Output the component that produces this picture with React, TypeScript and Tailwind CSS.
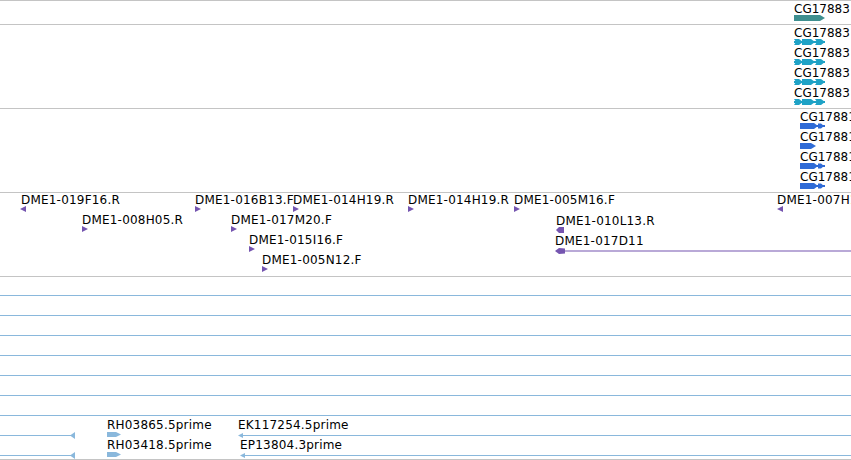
import React from "react";

const TEAL = "#3e8f8f";
const CYAN = "#1ea2c6";
const BLUE = "#2f6bd6";
const PURPLE = "#7555b0";
const SKY = "#8ab8dc";

type Glyph =
  | "teal"
  | "cyan"
  | "blueLong"
  | "blueShort"
  | "right"
  | "left"
  | "leftBar"
  | "leftLine"
  | "skyBlock"
  | "skyLeftLine"
  | "skyLineToArrow"
  | "skyLine";

type Feature = { x: number; y: number; glyph: Glyph; label?: string; ly?: number; lx?: number };

function GlyphSvg({ glyph }: { glyph: Glyph }) {
  switch (glyph) {
    case "teal":
      return (
        <svg width="32" height="6">
          <polygon points="0,0 26,0 31,3 26,6 0,6" fill={TEAL} />
        </svg>
      );
    case "cyan":
      return (
        <svg width="32" height="6">
          <rect x="0" y="2" width="31" height="2" fill={CYAN} />
          <polygon points="0,0 5,0 9,3 5,6 0,6 2,3" fill={CYAN} />
          <polygon points="8,0 17,0 21,3 17,6 8,6" fill={CYAN} />
          <polygon points="21,0 27,0 31,3 27,6 21,6 23,3" fill={CYAN} />
        </svg>
      );
    case "blueLong":
      return (
        <svg width="26" height="6">
          <rect x="0" y="2" width="25" height="2" fill={BLUE} />
          <polygon points="0,0 14,0 18,3 14,6 0,6" fill={BLUE} />
          <polygon points="18,0.5 21,0.5 24,3 21,5.5 18,5.5" fill={BLUE} />
        </svg>
      );
    case "blueShort":
      return (
        <svg width="18" height="6">
          <polygon points="0,0 11,0 16,3 11,6 0,6" fill={BLUE} />
        </svg>
      );
    case "right":
      return (
        <svg width="7" height="6">
          <polygon points="0,0 6,3 0,6" fill={PURPLE} />
        </svg>
      );
    case "left":
      return (
        <svg width="7" height="6">
          <polygon points="6,0 0,3 6,6" fill={PURPLE} />
        </svg>
      );
    case "leftBar":
      return (
        <svg width="9" height="6">
          <polygon points="0,3 3,0 8,0 8,6 3,6" fill={PURPLE} />
        </svg>
      );
    case "leftLine":
      return (
        <svg width="297" height="6">
          <rect x="4" y="2.5" width="293" height="1" fill={PURPLE} />
          <polygon points="0,3 4,0 10,0.5 10,5.5 4,6" fill={PURPLE} />
        </svg>
      );
    case "skyBlock":
      return (
        <svg width="15" height="5">
          <polygon points="0,0 9,0 14,2.5 9,5 0,5" fill={SKY} />
        </svg>
      );
    case "skyLeftLine":
      return (
        <svg width="614" height="5">
          <rect x="2" y="2" width="612" height="1" fill={SKY} />
          <polygon points="0,2.5 5,0 5,5" fill={SKY} />
        </svg>
      );
    case "skyLineToArrow":
      return (
        <svg width="76" height="7">
          <rect x="0" y="3" width="74" height="1" fill={SKY} />
          <polygon points="70,3.5 75,0 75,7" fill={SKY} />
        </svg>
      );
    case "skyLine":
      return (
        <svg width="851" height="1">
          <rect x="0" y="0" width="851" height="1" fill={SKY} />
        </svg>
      );
  }
}

function Track({
  top,
  className,
  labelClass = "",
  features,
}: {
  top: number;
  className: string;
  labelClass?: string;
  features: Feature[];
}) {
  // features use page coordinates; the padding box starts one pixel below the border
  const base = top + 1;
  return (
    <div className={`relative border-t border-[#c4c4c4] ${className}`}>
      {features.map((f, i) => (
        <React.Fragment key={i}>
          {f.label && (
            <div
              className={`absolute whitespace-nowrap ${labelClass}`}
              style={{ left: f.lx ?? f.x, top: (f.ly ?? f.y - 13) - base }}
            >
              {f.label}
            </div>
          )}
          <div className="absolute flex" style={{ left: f.x, top: f.y - base }}>
            <GlyphSvg glyph={f.glyph} />
          </div>
        </React.Fragment>
      ))}
    </div>
  );
}

const genes: Feature[] = [{ x: 794, y: 15, glyph: "teal", label: "CG17883", ly: 2 }];

const transcripts: Feature[] = [0, 1, 2, 3].map((r) => ({
  x: 794,
  y: 39 + r * 20,
  glyph: "cyan" as Glyph,
  label: "CG17883",
  ly: 26 + r * 20,
}));

const proteins: Feature[] = ["blueLong", "blueShort", "blueLong", "blueLong"].map((g, r) => ({
  x: 800,
  y: 123 + r * 20,
  glyph: g as Glyph,
  label: "CG17881",
  ly: 110 + r * 20,
}));

const ends: Feature[] = [
  { x: 20, y: 206, glyph: "left", label: "DME1-019F16.R", lx: 21 },
  { x: 195, y: 206, glyph: "right", label: "DME1-016B13.F" },
  { x: 293, y: 206, glyph: "right", label: "DME1-014H19.R" },
  { x: 408, y: 206, glyph: "right", label: "DME1-014H19.R" },
  { x: 514, y: 206, glyph: "right", label: "DME1-005M16.F" },
  { x: 777, y: 206, glyph: "left", label: "DME1-007H12.R" },
  { x: 82, y: 226, glyph: "right", label: "DME1-008H05.R" },
  { x: 231, y: 226, glyph: "right", label: "DME1-017M20.F" },
  { x: 556, y: 227, glyph: "leftBar", label: "DME1-010L13.R", ly: 214 },
  { x: 249, y: 246, glyph: "right", label: "DME1-015I16.F" },
  { x: 555, y: 248, glyph: "leftLine", label: "DME1-017D11", ly: 234 },
  { x: 262, y: 266, glyph: "right", label: "DME1-005N12.F" },
];

const ests: Feature[] = [
  ...[0, 1, 2, 3, 4, 5, 6].map((r) => ({ x: 0, y: 295 + r * 20, glyph: "skyLine" as Glyph })),
  { x: 0, y: 432, glyph: "skyLineToArrow" },
  { x: 107, y: 432, glyph: "skyBlock", label: "RH03865.5prime", ly: 418 },
  { x: 238, y: 433, glyph: "skyLeftLine", label: "EK117254.5prime", ly: 418 },
  { x: 0, y: 452, glyph: "skyLineToArrow" },
  { x: 107, y: 452, glyph: "skyBlock", label: "RH03418.5prime", ly: 438 },
  { x: 240, y: 453, glyph: "skyLeftLine", label: "EP13804.3prime", ly: 438 },
];

export default function App() {
  return (
    <div className="w-[851px] h-[460px] overflow-hidden bg-white text-black text-[12px] leading-[14px] tracking-[0.2px] font-['DejaVu_Sans',sans-serif]">
      <Track top={0} className="h-[24px]" labelClass="tracking-normal" features={genes} />
      <Track top={24} className="h-[84px]" labelClass="tracking-normal" features={transcripts} />
      <Track top={108} className="h-[84px]" labelClass="tracking-normal" features={proteins} />
      <Track top={192} className="h-[84px]" features={ends} />
      <Track top={276} className="h-[184px] border-b" features={ests} />
    </div>
  );
}
